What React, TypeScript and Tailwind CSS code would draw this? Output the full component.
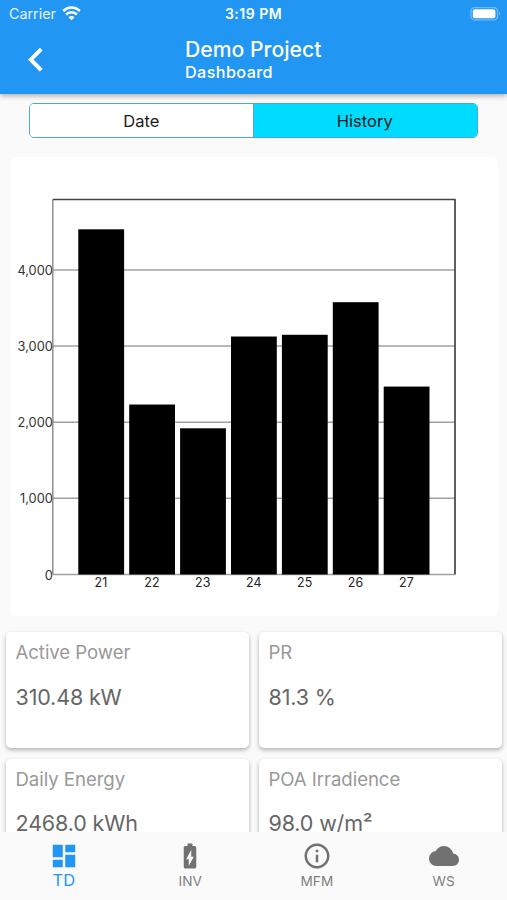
import { clsx } from "clsx";
import type { ComponentType } from "react";
import {
  MdBatteryChargingFull,
  MdCloud,
  MdDashboard,
  MdInfoOutline,
} from "react-icons/md";

type Reading = { label: string; value: string };

const readings: Reading[] = [
  { label: "Active Power", value: "310.48 kW" },
  { label: "PR", value: "81.3 %" },
  { label: "Daily Energy", value: "2468.0 kWh" },
  { label: "POA Irradience", value: "98.0 w/m²" },
];

const energyByDay = [
  { day: "21", kwh: 4533 },
  { day: "22", kwh: 2232 },
  { day: "23", kwh: 1920 },
  { day: "24", kwh: 3125 },
  { day: "25", kwh: 3148 },
  { day: "26", kwh: 3576 },
  { day: "27", kwh: 2468 },
];

const ticks = [0, 1000, 2000, 3000, 4000];

type Tab = {
  label: string;
  Icon: ComponentType<{ className?: string }>;
  active?: boolean;
};

const tabs: Tab[] = [
  { label: "TD", Icon: MdDashboard, active: true },
  { label: "INV", Icon: MdBatteryChargingFull },
  { label: "MFM", Icon: MdInfoOutline },
  { label: "WS", Icon: MdCloud },
];

function WifiIcon() {
  return (
    <svg width="19" height="15" viewBox="0 0 19 15" fill="none" stroke="white" strokeWidth="2.5">
      <path d="M1.1 5a12 12 0 0 1 16.8 0" />
      <path d="M4.1 8.5a7.7 7.7 0 0 1 10.8 0" />
      <path d="M9.5 14.2 6.5 11.2a4.2 4.2 0 0 1 6 0z" fill="white" stroke="none" />
    </svg>
  );
}

function BatteryIcon() {
  return (
    <svg width="31" height="14" viewBox="0 0 31 14">
      <rect x="1" y="0.5" width="26.5" height="12.4" rx="3.6" fill="none" stroke="white" strokeOpacity="0.35" strokeWidth="1.3" />
      <rect x="2.8" y="2.2" width="22.6" height="9" rx="2" fill="white" />
      <path d="M29 4.600c1.6.7 1.6 3.5 0 4.2z" fill="white" fillOpacity="0.4" />
    </svg>
  );
}

function BackIcon() {
  return (
    <svg width="18" height="26" viewBox="0 0 18 26" fill="none" stroke="white" strokeWidth="4">
      <path d="M15.2 2.2 4.800 12.700l10.400 10.500" />
    </svg>
  );
}

function StatusBar() {
  return (
    <div className="flex h-[27px] items-center justify-between pl-[9px] pr-[6px] text-white">
      <div className="flex flex-1 items-center gap-[6px]">
        <span className="text-[14.3px] text-white/90">Carrier</span>
        <WifiIcon />
      </div>
      <span className="-ml-[3px] text-[14px] font-semibold tracking-[0.5px]">3:19 PM</span>
      <div className="flex flex-1 justify-end">
        <BatteryIcon />
      </div>
    </div>
  );
}

function Header() {
  return (
    <header className="relative z-10 h-[94px] shrink-0 bg-[#2196f3] shadow-[0_2px_5px_rgba(0,0,0,0.3)]">
      <StatusBar />
      <div className="flex h-[65px] items-center">
        <button className="w-[185px] pl-[26px]" aria-label="Back">
          <BackIcon />
        </button>
        <div className="font-medium text-white">
          <h1 className="text-[21.2px] leading-[25px]">Demo Project</h1>
          <p className="text-[16.2px] leading-[20px] tracking-[0.4px]">Dashboard</p>
        </div>
      </div>
    </header>
  );
}

function Segments() {
  return (
    <div className="mx-[29px] mt-[9px] flex h-[35px] overflow-hidden rounded-[5px] border border-solid border-[#4ba4f0] text-[16.5px] text-[#1a1a1a]">
      <button className="flex-1 border-r border-solid border-[#4ba4f0] bg-white pt-px">Date</button>
      <button className="flex-1 bg-[#00dcff] pt-px pr-px">History</button>
    </div>
  );
}

function EnergyChart() {
  // plot area inside the card
  const left = 42.8;
  const right = 445;
  const top = 42.5;
  const bottom = 417.5;
  const perKwh = 0.07615;
  const step = 50.9;

  return (
    <div className="ml-[10px] mr-[9px] mt-[19px] h-[459px] rounded-md bg-white">
      <svg width="488" height="459" viewBox="0 0 488 459">
        {ticks.map((t) => {
          const y = bottom - t * perKwh;
          return (
            <g key={t}>
              <line x1={left} x2={right} y1={y} y2={y} stroke="#a0a0a0" strokeWidth="1.5" />
              <text x={left} y={y + 5} textAnchor="end" fontSize="12.8" fill="#333">
                {t.toLocaleString("en-US")}
              </text>
            </g>
          );
        })}
        <line x1={left} x2={left} y1={top} y2={bottom} stroke="#888" strokeWidth="1.4" />
        <path d={`M${left} ${top}H${right}V${bottom}`} fill="none" stroke="#444" strokeWidth="1.7" />
        {energyByDay.map((d, i) => {
          const x = 68.3 + i * step;
          const h = d.kwh * perKwh;
          return (
            <g key={d.day}>
              <rect x={x} y={bottom - h} width="45.8" height={h} fill="black" />
              <text x={x + 22.8} y={430} textAnchor="middle" fontSize="12.4" letterSpacing="0.2" fill="#222">
                {d.day}
              </text>
            </g>
          );
        })}
      </svg>
    </div>
  );
}

function ReadingCard({ label, value }: Reading) {
  return (
    <div className="h-[116px] rounded-[5px] bg-white px-[9.5px] pt-[9px] shadow-[0_2px_4px_rgba(0,0,0,0.3)]">
      <p className="text-[18.6px] leading-[23px] tracking-[-0.05px] text-[#999]">{label}</p>
      <p className="mt-[18.5px] text-[21.5px] leading-7 tracking-[-0.15px] text-[#666]">{value}</p>
    </div>
  );
}

function BottomNav() {
  return (
    <nav className="relative z-10 grid h-[68px] shrink-0 grid-cols-4 bg-[#fafafa]">
      {tabs.map(({ label, Icon, active }) => (
        <button
          key={label}
          className={clsx(
            "flex flex-col items-center pt-[9px]",
            active ? "pl-px text-[#2196f3]" : "text-[#717171]"
          )}
        >
          <Icon className="size-[30px]" />
          <span
            className={clsx(
              "leading-5",
              active ? "-mt-px text-[16.5px]" : "text-[13.6px] text-[#808080]"
            )}
          >
            {label}
          </span>
        </button>
      ))}
    </nav>
  );
}

export default function App() {
  return (
    <div className="flex h-[900px] w-[507px] flex-col overflow-hidden bg-[#fafafa] font-['Inter',sans-serif]">
      <Header />
      <main className="min-h-0 flex-1 overflow-hidden">
        <Segments />
        <EnergyChart />
        <div className="mt-4 grid grid-cols-2 gap-x-[10px] gap-y-[10.5px] pl-[6px] pr-[5px]">
          {readings.map((r) => (
            <ReadingCard key={r.label} {...r} />
          ))}
        </div>
      </main>
      <BottomNav />
    </div>
  );
}
